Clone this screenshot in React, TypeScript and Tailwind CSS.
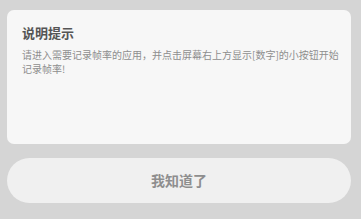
import React from 'react';

const font = { fontFamily: '"Noto Sans CJK SC", "Noto Sans", sans-serif' };

export default function App() {
  return (
    <div className="w-[361px] h-[219px] bg-[#d5d5d5] pl-[7px] pr-[10px] pt-[10px] flex flex-col" style={font}>
      {/* Tip card */}
      <div className="h-[134px] bg-[#f7f7f7] rounded-[7px] pl-[15px] pr-[2px] pt-[14px]">
        <h2 className="text-[13px] leading-[18px] font-bold text-[#555555]">说明提示</h2>
        <p className="mt-[6px] text-[10px] leading-[14px] text-[#8e8e8e] whitespace-nowrap">
          请进入需要记录帧率的应用，并点击屏幕右上方显示[数字]的小按钮开始
          <br />
          记录帧率!
        </p>
      </div>

      {/* Confirm button */}
      <button className="mt-[14px] h-[45px] w-full rounded-full bg-[#f0f0f0] text-[14px] font-bold text-[#8e8e8e]">
        我知道了
      </button>
    </div>
  );
}
